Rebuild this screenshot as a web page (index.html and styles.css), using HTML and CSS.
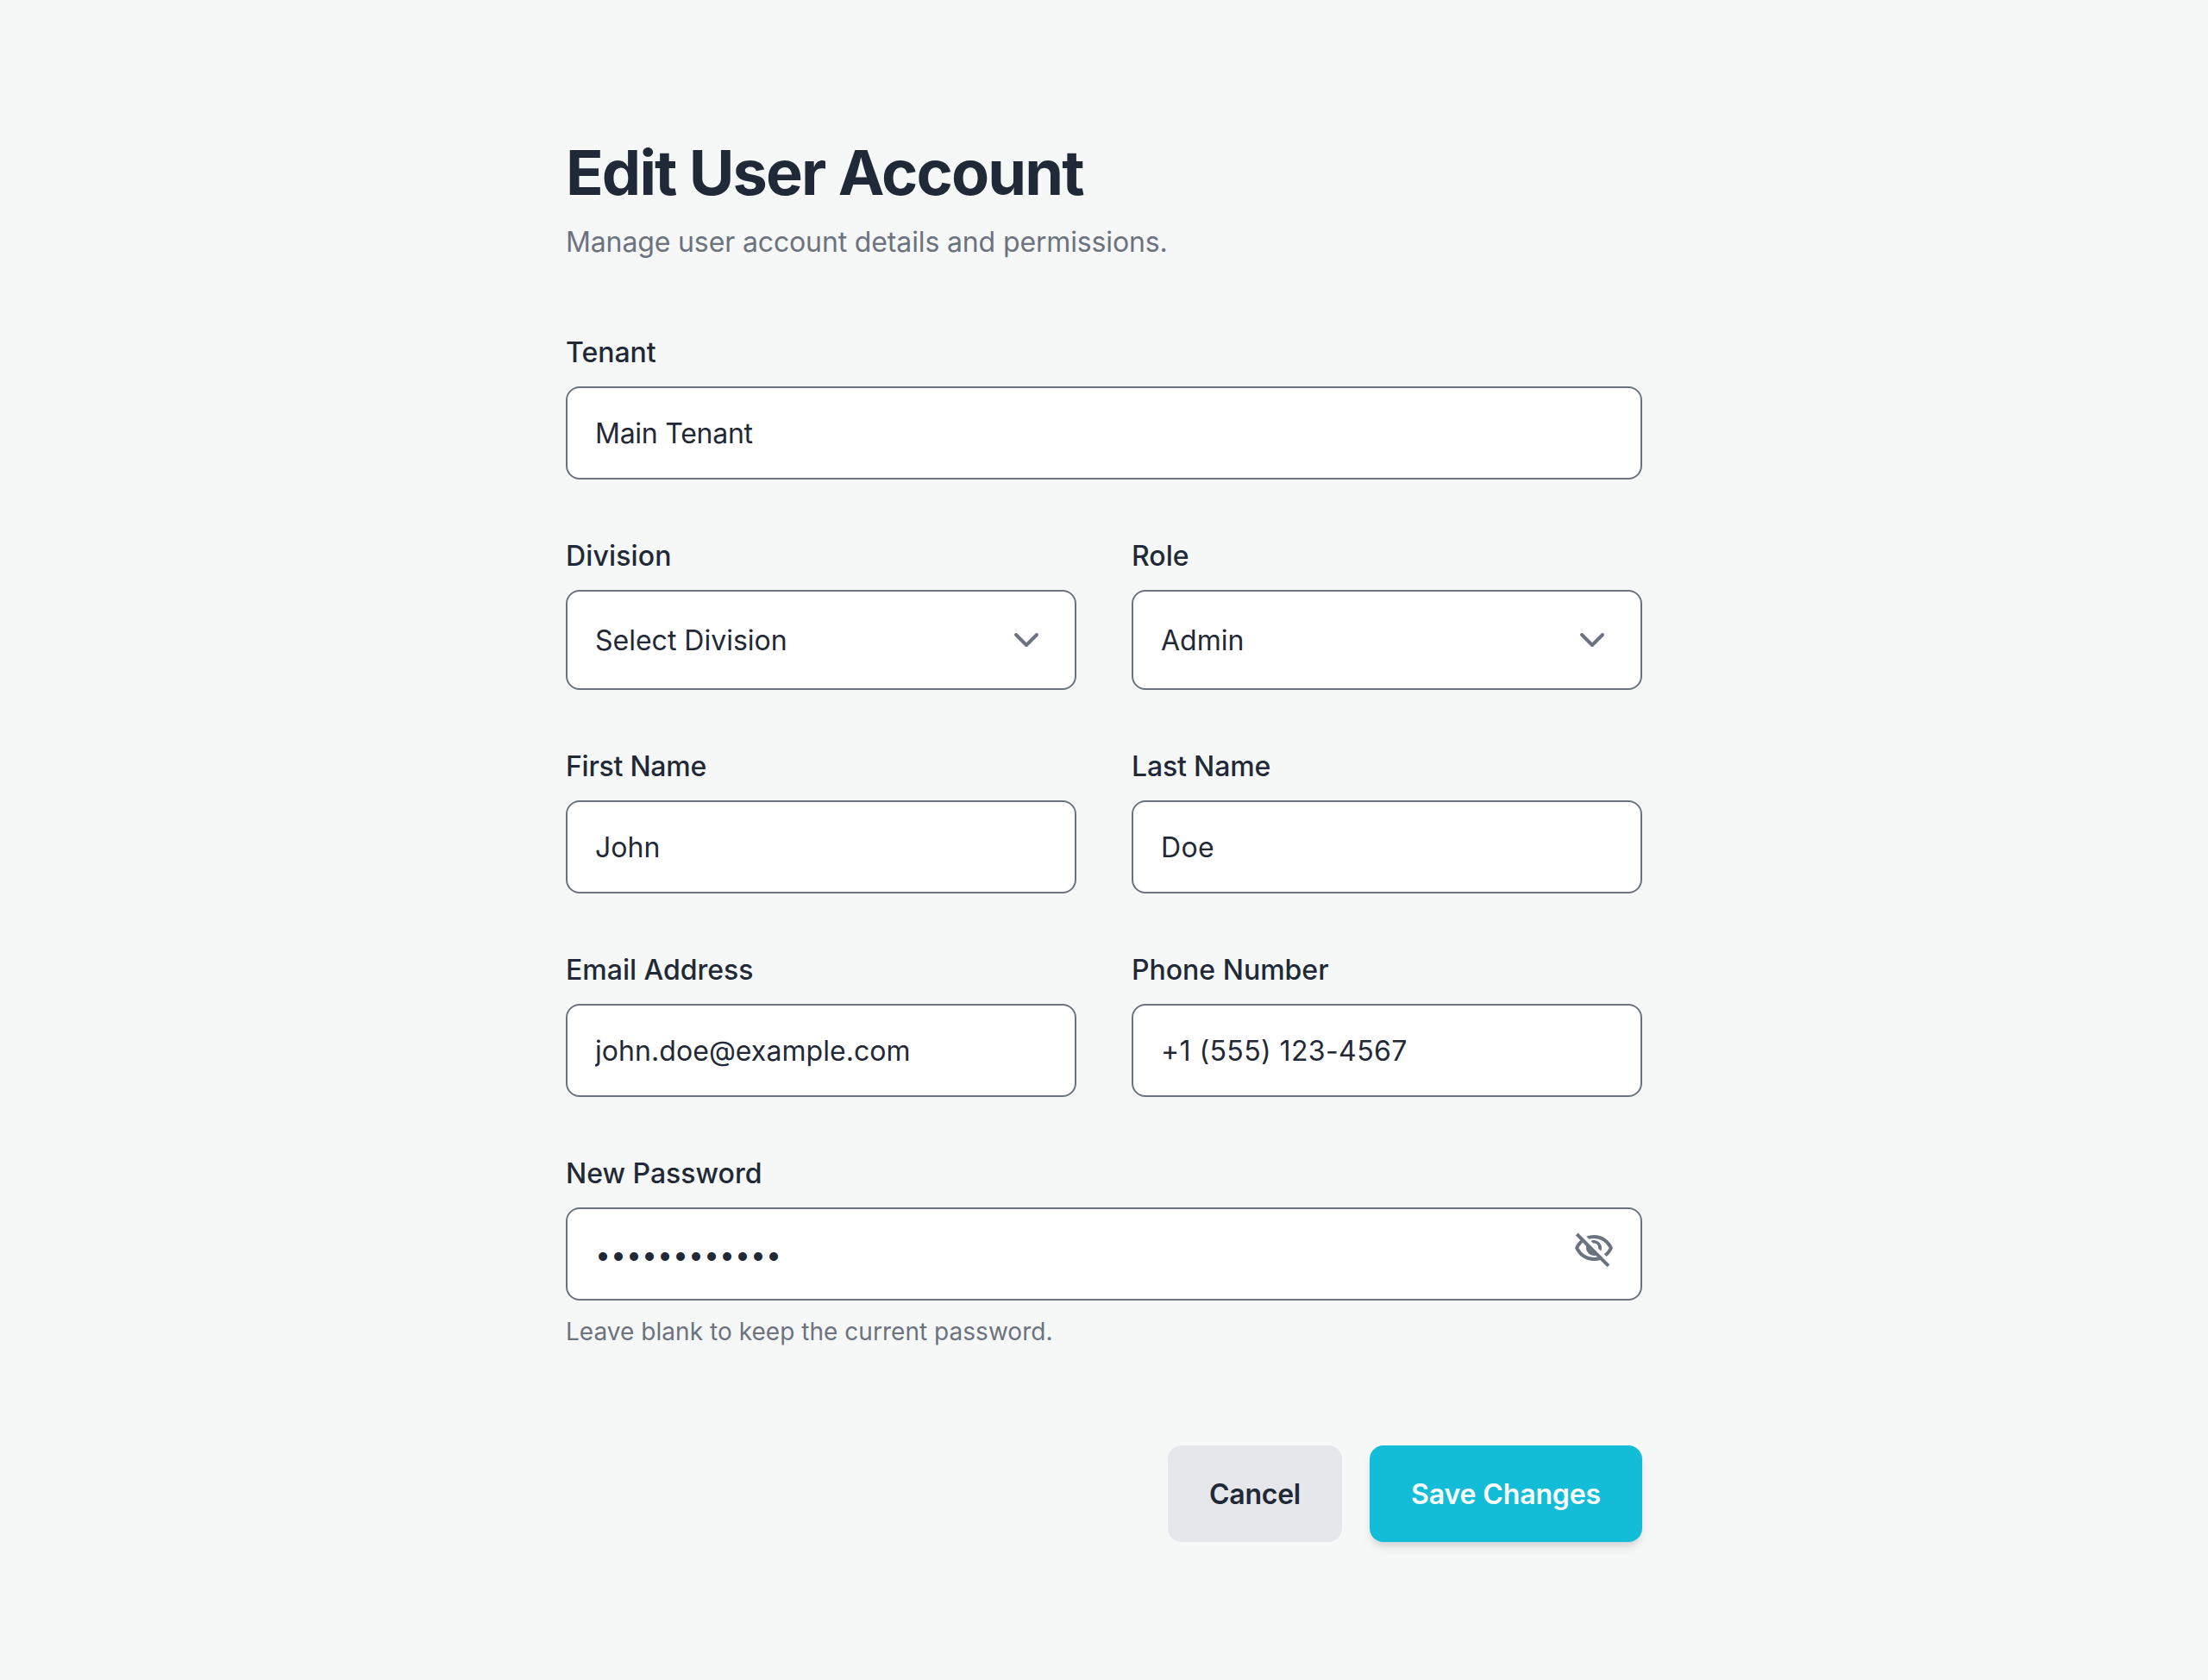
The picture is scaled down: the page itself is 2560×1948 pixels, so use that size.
FILE: index.html
```html
<!DOCTYPE html>
<html lang="en">
<head>
<meta charset="utf-8">
<title>Edit User Account</title>
<link rel="stylesheet" href="styles.css">
</head>
<body>
<main class="page">
  <header class="page-header">
    <h1 class="title">Edit User Account</h1>
    <p class="subtitle">Manage user account details and permissions.</p>
  </header>
  <form class="form">
    <div class="field field-wide">
      <label class="label" for="tenant">Tenant</label>
      <input class="input tracking-tight" id="tenant" type="text" value="Main Tenant">
    </div>
    <div class="field">
      <label class="label tracking-wide" for="division">Division</label>
      <div class="control">
        <select class="input select" id="division"><option>Select Division</option></select>
        <svg class="icon chevron" viewBox="0 0 24 24" aria-hidden="true"><path d="m6 9 6 6 6-6"/></svg>
      </div>
    </div>
    <div class="field">
      <label class="label" for="role">Role</label>
      <div class="control">
        <select class="input select" id="role"><option>Admin</option></select>
        <svg class="icon chevron" viewBox="0 0 24 24" aria-hidden="true"><path d="m6 9 6 6 6-6"/></svg>
      </div>
    </div>
    <div class="field">
      <label class="label tracking-tight" for="first-name">First Name</label>
      <input class="input" id="first-name" type="text" value="John">
    </div>
    <div class="field">
      <label class="label tracking-snug" for="last-name">Last Name</label>
      <input class="input tracking-wider" id="last-name" type="text" value="Doe">
    </div>
    <div class="field">
      <label class="label" for="email">Email Address</label>
      <input class="input tracking-open" id="email" type="email" value="john.doe@example.com">
    </div>
    <div class="field">
      <label class="label" for="phone">Phone Number</label>
      <input class="input tracking-wider" id="phone" type="tel" value="+1 (555) 123-4567">
    </div>
    <div class="field field-wide">
      <label class="label" for="password">New Password</label>
      <div class="control">
        <input class="input" id="password" type="password" value="password1234">
        <svg class="icon eye" viewBox="0 0 24 24" aria-hidden="true"><path d="m16.1 13.3-1.45-1.45q.225-1.175-.675-2.2t-2.325-.8L10.2 7.4q.425-.2.863-.3T12 7q1.875 0 3.188 1.313T16.5 11.5q0 .5-.1.938t-.3.862Zm3.2 3.15-1.45-1.4q.95-.725 1.688-1.588T20.8 11.5q-1.25-2.525-3.588-4.013T12 6q-.725 0-1.425.1T9.2 6.4L7.65 4.85q1.025-.425 2.1-.638T12 4q3.775 0 6.725 2.088T23 11.5q-.575 1.475-1.513 2.738T19.3 16.45Zm.5 6.15-4.2-4.15q-.875.275-1.763.413T12 19q-3.775 0-6.725-2.088T1 11.5q.525-1.325 1.325-2.463T4.15 7L1.4 4.2l1.4-1.4 18.4 18.4-1.4 1.4ZM5.55 8.4q-.725.65-1.325 1.425T3.2 11.5q1.25 2.525 3.588 4.013T12 17q.5 0 .975-.063t.975-.137l-.9-.95q-.275.075-.525.113T12 16q-1.875 0-3.188-1.313T7.5 11.5q0-.275.038-.525t.112-.525L5.55 8.4Z"/></svg>
      </div>
      <p class="hint">Leave blank to keep the current password.</p>
    </div>
    <div class="actions">
      <button class="button button-cancel" type="button">Cancel</button>
      <button class="button button-save" type="button">Save Changes</button>
    </div>
  </form>
</main>
</body>
</html>
```
FILE: styles.css
```css
* {
  box-sizing: border-box;
}

body {
  margin: 0;
  min-height: 100vh;
  background: #f6f8f7;
  color: #1f2937;
  font-family: Inter, "Liberation Sans", sans-serif;
  font-size: 32px;
  line-height: 48px;
}

.page {
  width: 1248px;
  margin: 0 auto;
  padding: 160px 0;
}

.page-header {
  display: flex;
  flex-direction: column;
  gap: 16px;
  margin-bottom: 80px;
}

.title {
  margin: 0;
  font-size: 72px;
  font-weight: 700;
  line-height: 80px;
  letter-spacing: -1.86px;
}

.subtitle {
  height: 48px;
  margin: 0;
  color: #6b7280;
  line-height: 49px;
  letter-spacing: -0.135px;
}

.form {
  display: grid;
  grid-template-columns: 1fr 1fr;
  gap: 64px;
}

.field {
  display: flex;
  flex-direction: column;
}

.field-wide,
.actions {
  grid-column: 1 / -1;
}

.label {
  height: 48px;
  margin-bottom: 16px;
  font-weight: 500;
  line-height: 49px;
}

.control {
  position: relative;
  display: flex;
}

.input {
  width: 100%;
  height: 108px;
  padding: 0 32px;
  border: 2px solid #6b7280;
  border-radius: 16px;
  background: #fff;
  color: #1f2937;
  font: inherit;
  outline: none;
}

.select {
  height: 116px;
  padding-top: 2px;
  appearance: none;
}

.tracking-tight {
  letter-spacing: -0.26px;
}

.tracking-snug {
  letter-spacing: -0.16px;
}

.tracking-open {
  letter-spacing: 0.06px;
}

.tracking-wide {
  letter-spacing: 0.15px;
}

.tracking-wider {
  letter-spacing: 0.4px;
}

/* Icons lie over the right end of their control. */
.icon {
  position: absolute;
  right: 32px;
  width: 48px;
  height: 48px;
  pointer-events: none;
}

.chevron {
  top: 34px;
  right: 34px;
  fill: none;
  stroke: #6b7280;
  stroke-width: 2;
  stroke-linecap: round;
  stroke-linejoin: round;
}

.eye {
  top: 24px;
  fill: #6b7280;
}

.hint {
  margin: 16px 0 0;
  color: #6b7280;
  font-size: 28px;
  line-height: 40px;
  letter-spacing: 0.035px;
}

.actions {
  display: flex;
  justify-content: flex-end;
  gap: 32px;
  padding-top: 48px;
}

.button {
  height: 112px;
  padding: 2px 48px 0;
  border: 0;
  border-radius: 16px;
  font: inherit;
  font-weight: 600;
}

.button-cancel {
  background: #e5e7eb;
  color: #1f2937;
  letter-spacing: -0.245px;
}

.button-save {
  background: #13bdd8;
  color: #fff;
  letter-spacing: -0.12px;
  box-shadow: 0 8px 12px -2px rgb(0 0 0 / 0.1), 0 4px 8px -4px rgb(0 0 0 / 0.1);
}
```
